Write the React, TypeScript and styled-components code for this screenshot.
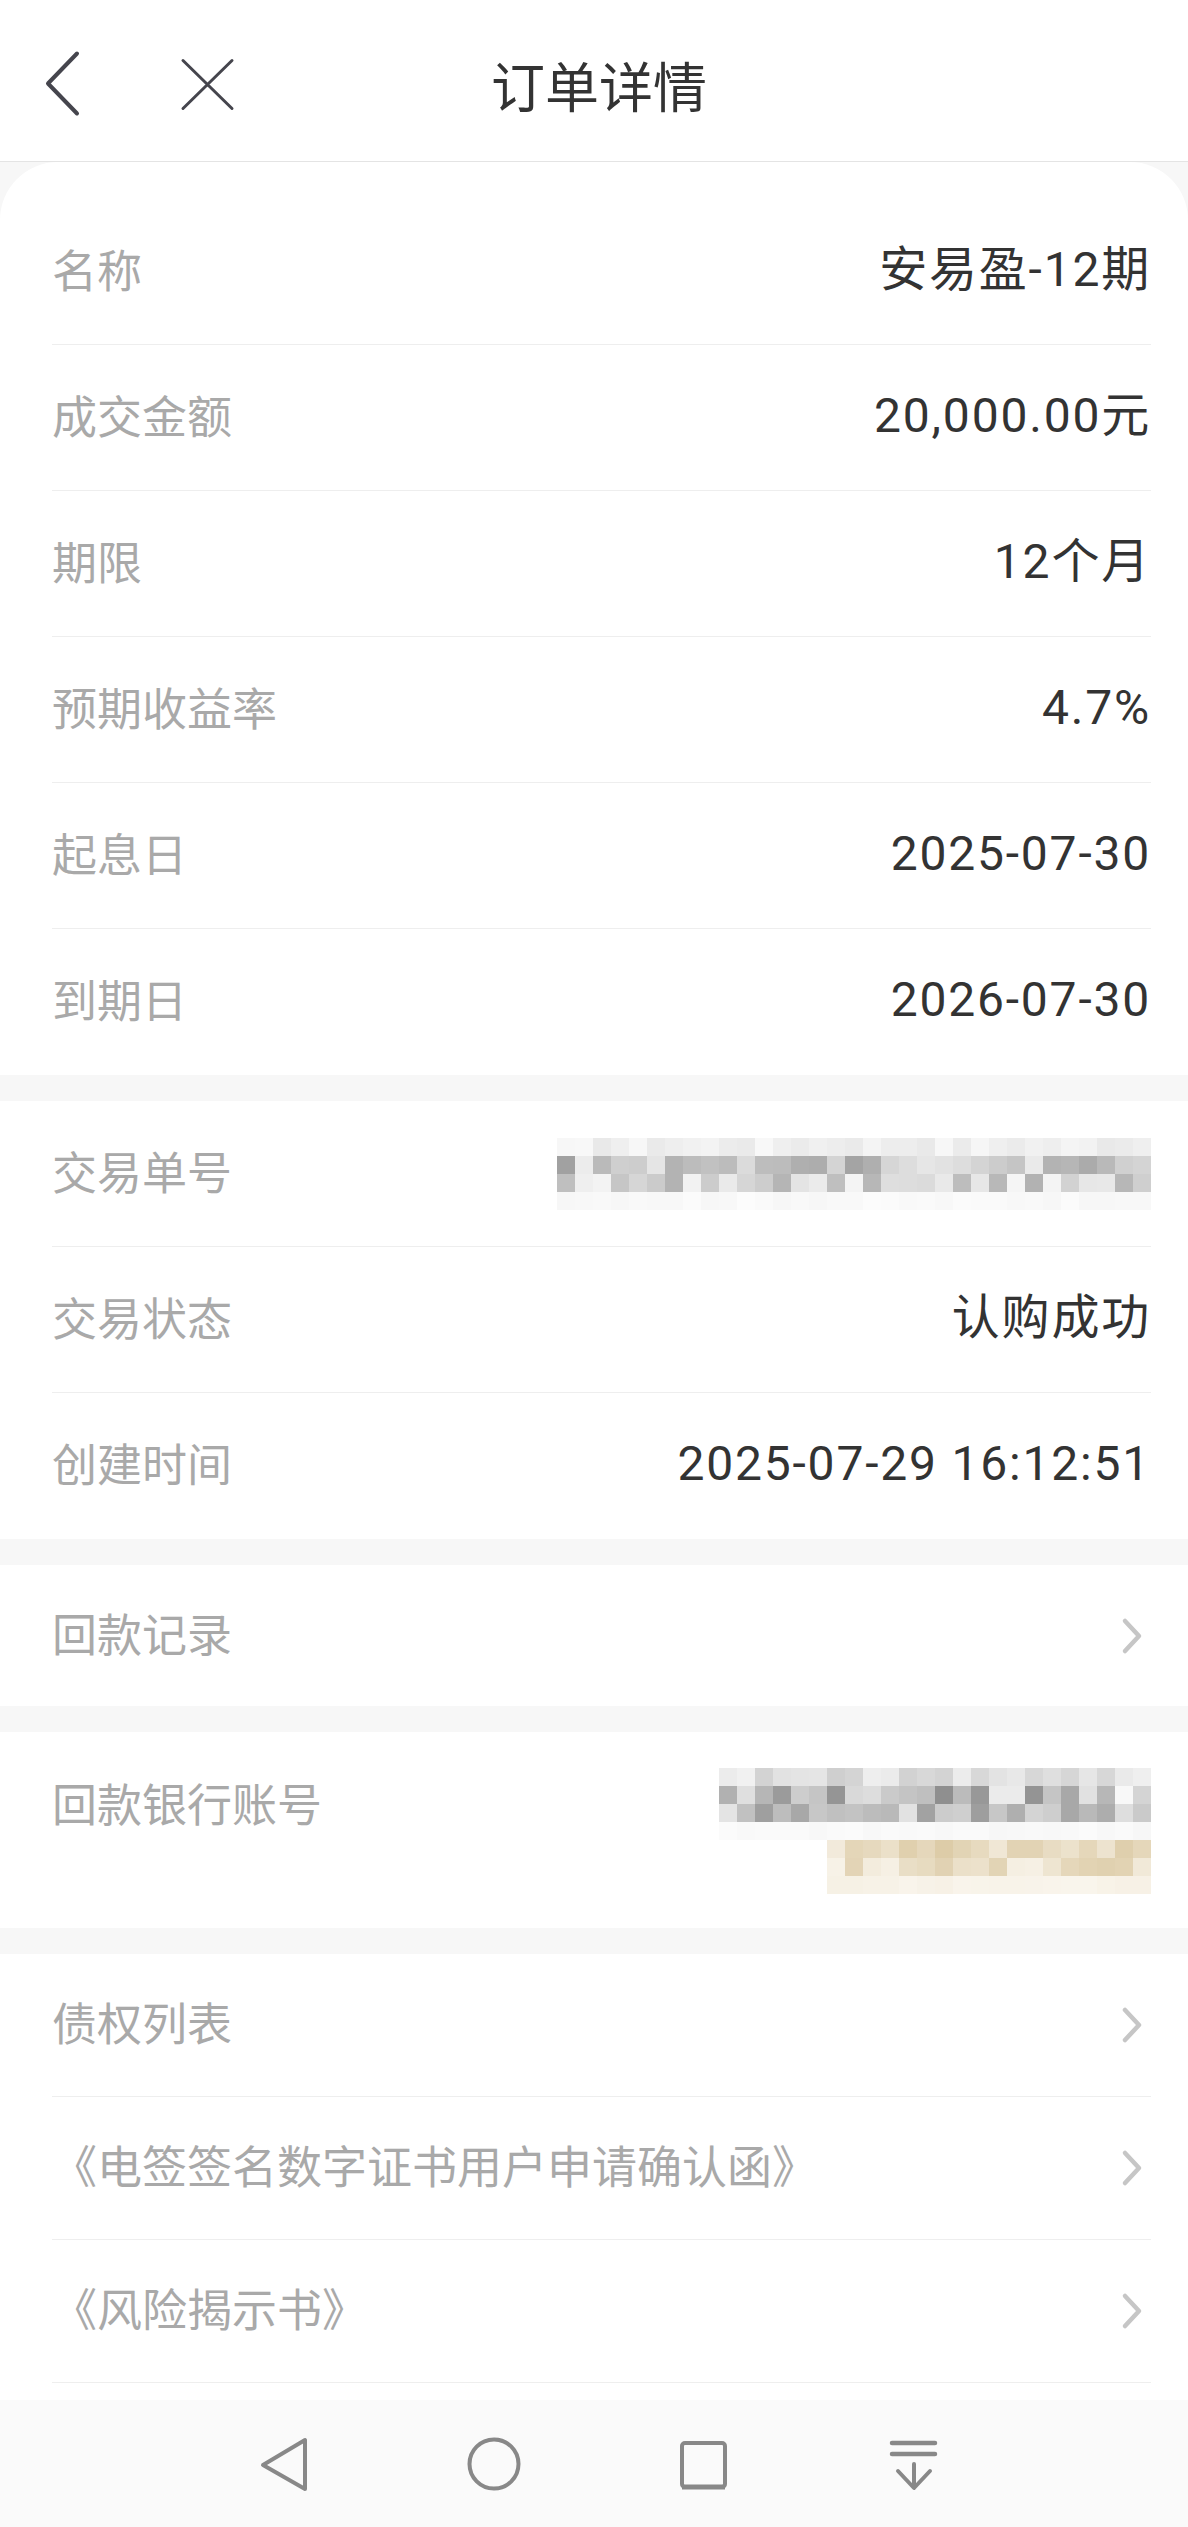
import React from "react"
import styled, {createGlobalStyle} from "styled-components"

const GlobalStyle = createGlobalStyle`
    html, body {
        margin: 0;
        padding: 0;
        background: #f7f7f7;
    }
    * { box-sizing: border-box; }
`

const Screen = styled.div`
    width: 1188px;
    height: 2527px;
    display: flex;
    flex-direction: column;
    overflow: hidden;
    background: #f7f7f7;
    font-family: Roboto, "Noto Sans CJK SC", sans-serif;
`

const Header = styled.header`
    flex-shrink: 0;
    height: 162px;
    background: #fff;
    border-bottom: 1px solid #e4e4e4;
    display: grid;
    grid-template-columns: 1fr auto 1fr;
    align-items: center;
    padding-left: 10px;
`

const HeaderLeft = styled.div`
    display: flex;
    align-items: center;
    gap: 84px;
    padding-left: 26px;
`

const IconButton = styled.button`
    border: 0;
    background: none;
    padding: 0;
    display: flex;
`

const Title = styled.h1`
    margin: 0;
    font-family: "Noto Sans CJK SC", sans-serif;
    font-weight: 400;
    font-size: 54px;
    color: #333;
    line-height: 1;
    padding-top: 8px;
`

const Scroll = styled.main`
    flex: 1;
    overflow: hidden;
    display: flex;
    flex-direction: column;
    gap: 26px;
`

const Section = styled.section<{ readonly first?: boolean, readonly fill?: boolean }>`
    background: #fff;
    padding-top: ${({first}) => first ? "37px" : "0"};
    border-radius: ${({first}) => first ? "58px 58px 0 0" : "0"};
    flex: ${({fill}) => fill ? "1" : "none"};
`

const Row = styled.div<{ readonly h: number, readonly top?: boolean }>`
    height: ${({h}) => h}px;
    margin: 0 37px 0 52px;
    display: flex;
    justify-content: space-between;
    align-items: ${({top}) => top ? "flex-start" : "center"};
    border-bottom: 1px solid #eeeeee;
`

const Label = styled.span<{ readonly top?: boolean }>`
    font-family: "Noto Sans CJK SC", sans-serif;
    font-size: 45px;
    color: #a9a9a9;
    line-height: 60px;
    padding-top: ${({top}) => top ? "41px" : "0"};
    padding-bottom: ${({top}) => top ? "0" : "6px"};
`

const Value = styled.span`
    font-family: Roboto, "Noto Sans CJK SC", sans-serif;
    font-size: 48px;
    letter-spacing: 1.8px;
    color: #333;
    line-height: 60px;
    padding-bottom: 4px;
`

const AccountStack = styled.div`
    display: flex;
    flex-direction: column;
    align-items: flex-end;
    padding-top: 36px;
`

const NavBar = styled.nav`
    flex-shrink: 0;
    height: 127px;
    background: #fafafa;
    display: flex;
    justify-content: center;
    align-items: center;
    gap: 150px;
    padding-left: 10px;
`

const seeded = (start: number) => {
    let seed = start
    return () => {
        seed = (seed * 9301 + 49297) % 233280
        return seed / 233280
    }
}

const gray = (v: number) => `rgb(${v},${v},${v})`
const tan = (t: number) => {
    const mix = (a: number, b: number) => Math.round(a + (b - a) * t)
    return `rgb(${mix(250, 216)},${mix(246, 197)},${mix(238, 156)})`
}

const buildGrid = (cols: number, rows: ReadonlyArray<[number, number]>, seed: number, paint: (v: number) => string) => {
    const rnd = seeded(seed)
    return rows.map(([lo, hi]) => Array.from({length: cols}, () => paint(lo + (hi - lo) * rnd())))
}

const tradeNoCells = buildGrid(33, [[232, 249], [158, 236], [176, 246], [247, 252]], 17, v => gray(Math.round(v)))
const accountCells = buildGrid(24, [[205, 242], [140, 248], [148, 236], [247, 251]], 41, v => gray(Math.round(v)))
const bankCells = buildGrid(18, [[0.15, 0.85], [0.05, 0.8], [0.02, 0.12]], 73, tan)

const Mosaic = ({cells, size = 18}: { readonly cells: ReadonlyArray<ReadonlyArray<string>>, readonly size?: number }) =>
    <svg width={cells[0].length * size} height={cells.length * size} shapeRendering="crispEdges">
        {cells.map((line, r) => line.map((c, i) =>
            <rect key={`${r}-${i}`} x={i * size} y={r * size} width={size} height={size} fill={c}/>))}
    </svg>

const Chevron = () =>
    <svg width="30" height="40" viewBox="0 0 30 40">
        <path d="M4 5 L18 20 L4 35" fill="none" stroke="#c6c6c6" strokeWidth="4.5" strokeLinecap="round" strokeLinejoin="round"/>
    </svg>

const details: ReadonlyArray<[string, string]> = [
    ["名称", "安易盈-12期"],
    ["成交金额", "20,000.00元"],
    ["期限", "12个月"],
    ["预期收益率", "4.7%"],
    ["起息日", "2025-07-30"],
    ["到期日", "2026-07-30"],
]

const links = ["债权列表", "《电签签名数字证书用户申请确认函》", "《风险揭示书》"]

const InfoRow = ({label, value, last}: { readonly label: string, readonly value: string, readonly last?: boolean }) =>
    <Row h={146} style={last ? {borderBottom: 0} : undefined}>
        <Label>{label}</Label>
        <Value>{value}</Value>
    </Row>

const LinkRow = ({label, h = 143}: { readonly label: string, readonly h?: number }) =>
    <Row h={h}>
        <Label>{label}</Label>
        <Chevron/>
    </Row>

const LastRowFix = styled.div`
    & > ${Row}:last-child { border-bottom: 0; }
`

export default function App() {
    return <Screen>
        <GlobalStyle/>
        <Header>
            <HeaderLeft>
                <IconButton aria-label="返回">
                    <svg width="50" height="80" viewBox="0 0 50 80">
                        <polyline points="41,12.5 12,42.5 41,72.5" fill="none" stroke="#45454d" strokeWidth="4" strokeLinecap="round" strokeLinejoin="round"/>
                    </svg>
                </IconButton>
                <IconButton aria-label="关闭">
                    <svg width="75" height="80" viewBox="0 0 75 80">
                        <path d="M13 19.5 L62 67.5 M62 19.5 L13 67.5" stroke="#45454d" strokeWidth="3" strokeLinecap="round"/>
                    </svg>
                </IconButton>
            </HeaderLeft>
            <Title>订单详情</Title>
            <div/>
        </Header>

        <Scroll>
            <Section first>
                <LastRowFix>
                    {details.map(([label, value]) => <InfoRow key={label} label={label} value={value}/>)}
                </LastRowFix>
            </Section>

            <Section>
                <LastRowFix>
                    <Row h={146}>
                        <Label>交易单号</Label>
                        <Mosaic cells={tradeNoCells}/>
                    </Row>
                    <InfoRow label="交易状态" value="认购成功"/>
                    <InfoRow label="创建时间" value="2025-07-29 16:12:51"/>
                </LastRowFix>
            </Section>

            <Section>
                <LastRowFix>
                    <LinkRow label="回款记录" h={141}/>
                </LastRowFix>
            </Section>

            <Section>
                <LastRowFix>
                    <Row h={196} top>
                        <Label top>回款银行账号</Label>
                        <AccountStack>
                            <Mosaic cells={accountCells}/>
                            <Mosaic cells={bankCells}/>
                        </AccountStack>
                    </Row>
                </LastRowFix>
            </Section>

            <Section fill>
                {links.map(label => <LinkRow key={label} label={label}/>)}
            </Section>
        </Scroll>

        <NavBar>
            <svg width="60" height="60" viewBox="0 0 60 60">
                <path d="M51 6 L51 55 L9 31 Z" fill="none" stroke="#888" strokeWidth="4" strokeLinejoin="round"/>
            </svg>
            <svg width="60" height="60" viewBox="0 0 60 60">
                <circle cx="30" cy="30" r="24.5" fill="none" stroke="#888" strokeWidth="4"/>
            </svg>
            <svg width="60" height="60" viewBox="0 0 60 60">
                <rect x="8" y="9" width="43" height="44" rx="3" fill="none" stroke="#888" strokeWidth="4"/>
                <line x1="8" y1="53" x2="51" y2="53" stroke="#888" strokeWidth="5"/>
            </svg>
            <svg width="60" height="60" viewBox="0 0 60 60">
                <path d="M8 9 L51 9 M8 20 L51 20" stroke="#888" strokeWidth="4.5" strokeLinecap="round"/>
                <path d="M30 30 L30 53 M14 37 L30 54 L46 37" fill="none" stroke="#888" strokeWidth="4" strokeLinecap="round" strokeLinejoin="round"/>
            </svg>
        </NavBar>
    </Screen>
}
